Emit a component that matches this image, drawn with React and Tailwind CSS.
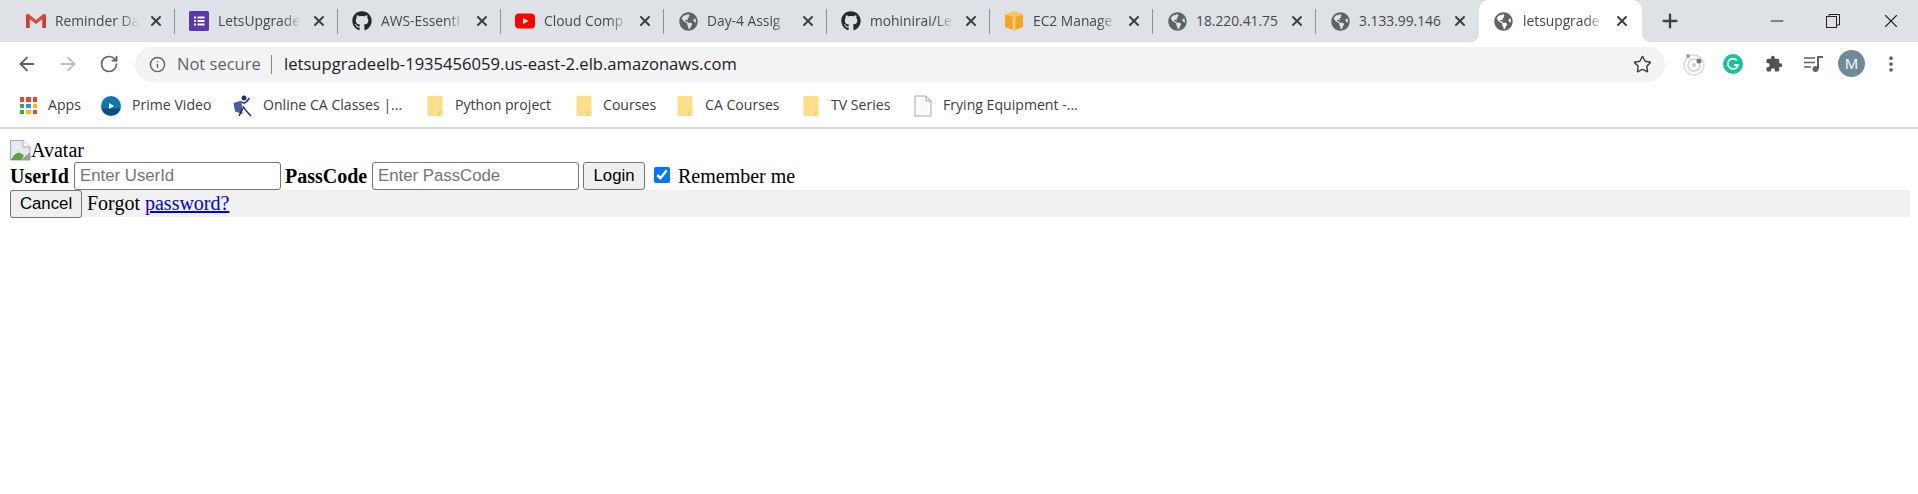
import { ArrowLeft, ArrowRight, RotateCw, Info, Star, X, Plus, Minus, MoreVertical } from 'lucide-react'
import { FaGithub, FaGlobeAmericas } from 'react-icons/fa'

function GmailIcon() {
  return (
    <svg width="20" height="16" viewBox="0 0 20 16" className="shrink-0">
      <path d="M0 2 L2 0.5 L10 7 L18 0.5 L20 2 L20 15 L16.5 15 L16.5 6 L10 11 L3.5 6 L3.5 15 L0 15 Z" fill="#d9483b" />
      <path d="M0 2 L3.5 6 L3.5 15 L0 15 Z" fill="#c5403a" />
      <path d="M20 2 L16.5 6 L16.5 15 L20 15 Z" fill="#c5403a" />
    </svg>
  )
}

function FormsIcon() {
  return (
    <svg width="20" height="20" viewBox="0 0 20 20" className="shrink-0">
      <rect width="20" height="20" rx="1.5" fill="#5e35b1" />
      <path d="M5 5.500h2v2H5zM5 9h2v2H5zM5 12.500h2v2H5zM8.500 5.500h7v2h-7zM8.500 9h7v2h-7zM8.500 12.500h7v2h-7z" fill="#fff" />
    </svg>
  )
}

function YoutubeIcon() {
  return (
    <svg width="20" height="16" viewBox="0 0 20 16" className="shrink-0">
      <rect width="20" height="15" y="0.500" rx="4" fill="#f00" />
      <path d="M8 5 L13.500 8 L8 11 Z" fill="#fff" />
    </svg>
  )
}

function AwsBoxIcon() {
  return (
    <svg width="20" height="20" viewBox="0 0 20 20" className="shrink-0">
      <path d="M10 0.500 L19 3.500 L19 16 L10 19.500 L1 16 L1 3.500 Z" fill="#f5a623" />
      <path d="M1 3.500 L10 0.500 L19 3.500 L10 6.500 Z" fill="#fbc766" />
      <path d="M8.700 6.500 L11.300 6.500 L11.300 19.500 L8.700 19.500 Z" fill="#fbd58d" />
    </svg>
  )
}

const globe = <FaGlobeAmericas size={19} color="#5f6368" className="shrink-0" />
const github = <FaGithub size={20} color="#24292e" className="shrink-0" />

const tabs = [
  { title: 'Reminder Da', icon: <GmailIcon />, fade: true },
  { title: 'LetsUpgrade', icon: <FormsIcon />, fade: true },
  { title: 'AWS-Essenti', icon: github, fade: true },
  { title: 'Cloud Comp', icon: <YoutubeIcon />, fade: true },
  { title: 'Day-4 Assig', icon: globe, fade: true },
  { title: 'mohinirai/Le', icon: github, fade: true },
  { title: 'EC2 Manage', icon: <AwsBoxIcon />, fade: true },
  { title: '18.220.41.75', icon: globe, fade: false },
  { title: '3.133.99.146', icon: globe, fade: false },
]

function Tab({ tab, last }) {
  return (
    <div className="w-[163px] h-[42px] shrink-0 flex items-center relative">
      <div className="flex items-center pl-[14px] w-full">
        <span className="w-[20px] flex justify-center shrink-0">{tab.icon}</span>
        <span
          className={`ml-[9px] w-[84px] whitespace-nowrap text-[13.8px] text-[#45484c] ${
            tab.fade ? '[mask-image:linear-gradient(to_right,black_78%,transparent)]' : ''
          }`}
        >
          {tab.title}
        </span>
        <X size={16} strokeWidth={3} color="#3c4043" className="ml-[9px] shrink-0" />
      </div>
      {!last && <span className="absolute right-0 top-[9px] h-[25px] w-px bg-[#8e9196]" />}
    </div>
  )
}

function ActiveTab() {
  return (
    <div className="w-[163px] h-[42px] shrink-0 flex items-center bg-white rounded-t-[10px] relative pl-[15px]">
      <svg width="8" height="8" viewBox="0 0 8 8" className="absolute -left-[8px] bottom-0">
        <path d="M8 0 V8 H0 C4 8 8 4 8 0 Z" fill="#fff" />
      </svg>
      <svg width="8" height="8" viewBox="0 0 8 8" className="absolute -right-[8px] bottom-0">
        <path d="M0 0 V8 H8 C4 8 0 4 0 0 Z" fill="#fff" />
      </svg>
      {globe}
      <span className="ml-[10px] w-[81px] whitespace-nowrap text-[13.8px] text-[#45484c] [mask-image:linear-gradient(to_right,black_78%,transparent)]">
        letsupgrade
      </span>
      <X size={16} strokeWidth={3} color="#3c4043" className="ml-[10px] shrink-0" />
    </div>
  )
}

function TabStrip() {
  return (
    <div className="h-[42px] bg-[#dee1e6] flex items-center pl-[12px]">
      {tabs.map((t, i) => (
        <Tab key={t.title} tab={t} last={i === tabs.length - 1} />
      ))}
      <ActiveTab />
      <Plus size={22} strokeWidth={2.5} color="#3c4043" className="ml-[17px] shrink-0" />
      <div className="ml-auto flex items-center text-[#3c4043]">
        <Minus size={20} strokeWidth={1.2} color="#222" className="mr-[39px]" />
        <svg width="14" height="14" viewBox="0 0 14 14" fill="none" stroke="#222" strokeWidth="1" className="mr-[40px]">
          <rect x="0.500" y="2.500" width="10" height="11" />
          <path d="M3 2.500 V0.500 H13.500 V11 H10.500" />
        </svg>
        <X size={22} strokeWidth={1.2} color="#222" className="mr-[16px]" />
      </div>
    </div>
  )
}

function ExtTarget() {
  return (
    <svg width="22" height="24" viewBox="0 0 22 24" fill="none" className="shrink-0">
      <circle cx="11" cy="13" r="10" stroke="#dcdcdc" strokeWidth="1.500" />
      <circle cx="11" cy="13" r="6" stroke="#cfcfcf" strokeWidth="1.500" />
      <circle cx="11" cy="13" r="2" fill="#cfcfcf" />
      <circle cx="5" cy="4" r="2" fill="#a0a0a0" />
      <circle cx="16" cy="9" r="2.500" fill="#777" />
    </svg>
  )
}

function GrammarlyIcon() {
  return (
    <svg width="20" height="20" viewBox="0 0 20 20" fill="none" className="shrink-0">
      <circle cx="10" cy="10" r="10" fill="#15c39a" />
      <path d="M14 6.500 A5.200 5.200 0 1 0 15 11 H11" stroke="#fff" strokeWidth="1.800" />
    </svg>
  )
}

function PuzzleIcon() {
  return (
    <svg width="18" height="18" viewBox="0 0 24 24" fill="#4f5357" className="shrink-0">
      <path d="M20.500 11H19V7a2 2 0 0 0-2-2h-4V3.500a2.500 2.500 0 0 0-5 0V5H4a2 2 0 0 0-2 2v3.800h1.500a2.700 2.700 0 0 1 0 5.400H2V20a2 2 0 0 0 2 2h3.800v-1.500a2.700 2.700 0 0 1 5.400 0V22H17a2 2 0 0 0 2-2v-4h1.500a2.500 2.500 0 0 0 0-5z" />
    </svg>
  )
}

function QueueIcon() {
  return (
    <svg width="20" height="18" viewBox="0 0 20 18" fill="none" className="shrink-0">
      <path d="M0 3h11M0 7.500h11M0 12h7" stroke="#5f6368" strokeWidth="1.600" />
      <path d="M14 14V2h5" stroke="#5f6368" strokeWidth="2" />
      <circle cx="11.500" cy="14" r="3" fill="#5f6368" />
    </svg>
  )
}

function Toolbar() {
  return (
    <div className="h-[43px] bg-white flex items-center">
      <ArrowLeft size={22} strokeWidth={2} color="#5f6368" className="ml-[16px] shrink-0" />
      <ArrowRight size={22} strokeWidth={2} color="#bcbfc3" className="ml-[19px] shrink-0" />
      <RotateCw size={20} strokeWidth={2} color="#5f6368" className="ml-[20px] shrink-0" />
      <div className="ml-[16px] w-[1530px] h-[35px] mt-[1px] rounded-full bg-[#f1f3f4] flex items-center pl-[14px] pr-[13px] shrink-0">
        <Info size={17} strokeWidth={2} color="#5f6368" className="shrink-0" />
        <span className="ml-[11px] text-[16.5px] text-[#5f6368] whitespace-nowrap w-[85px] pt-[1px]">Not secure</span>
        <span className="ml-[9px] w-px h-[19px] bg-[#80868b]" />
        <span className="ml-[12px] text-[16.6px] text-[#202124] whitespace-nowrap pt-[1px]">
          letsupgradeelb-1935456059.us-east-2.elb.amazonaws.com
        </span>
        <Star size={19} strokeWidth={1.8} color="#3c4043" className="ml-auto shrink-0" />
      </div>
      <div className="ml-[18px] flex items-center">
        <span className="w-[22px] flex justify-center"><ExtTarget /></span>
        <span className="ml-[17px] w-[22px] flex justify-center"><GrammarlyIcon /></span>
        <span className="ml-[19px] w-[22px] flex justify-center"><PuzzleIcon /></span>
        <span className="ml-[18px] w-[22px] flex justify-center"><QueueIcon /></span>
        <span className="ml-[13px] w-[27px] h-[27px] rounded-full bg-[#6f8a99] text-white text-[15px] flex items-center justify-center">M</span>
        <MoreVertical size={20} strokeWidth={2.5} color="#5f6368" className="ml-[16px]" />
      </div>
    </div>
  )
}

const appColors = ['#ea4335', '#ea4335', '#ea4335', '#34a853', '#4285f4', '#fbbc05', '#34a853', '#fbbc05', '#ea4335']

function AppsIcon() {
  return (
    <span className="grid grid-cols-3 gap-[2px] w-[17px] h-[17px] shrink-0">
      {appColors.map((c, i) => (
        <span key={i} className="w-[4.3px] h-[4.3px]" style={{ background: c }} />
      ))}
    </span>
  )
}

function PrimeIcon() {
  return (
    <svg width="20" height="20" viewBox="0 0 20 20" className="shrink-0">
      <circle cx="10" cy="10" r="10" fill="#0f79af" />
      <path d="M0.500 12.500 A10 10 0 0 0 19.500 12.500 Z" fill="#0b4f80" />
      <path d="M8 7 L13 10 L8 13 Z" fill="#fff" />
    </svg>
  )
}

function OnlineCaIcon() {
  return (
    <svg width="20" height="22" viewBox="0 0 20 22" fill="none" className="shrink-0">
      <circle cx="11" cy="3" r="2.500" fill="#2b2d6e" />
      <path d="M0.500 8 L8.500 5.500 L9.500 19 L2 16.500 Z" fill="#4a5a9a" />
      <path d="M9 7 C12 10 14 6 16.500 3 M10 11 C12 15 14 17 18 21 M10 13 L6 21" stroke="#23256a" strokeWidth="1.500" />
    </svg>
  )
}

function FolderIcon() {
  return (
    <svg width="16" height="22" viewBox="0 0 16 22" className="shrink-0">
      <path d="M1.500 1 H11 L14 1 Q15.500 1 15.500 2.500 V20 Q15.500 21 14.500 21 H2 Q0.500 21 0.500 20 V2 Q0.500 1 1.500 1 Z" fill="#fbdf8a" />
      <path d="M12 21 V17 H15.500" fill="none" stroke="#e6c25e" strokeWidth="0.800" />
    </svg>
  )
}

function DocIcon() {
  return (
    <svg width="18" height="22" viewBox="0 0 18 22" className="shrink-0">
      <path d="M1 1 H12 L17 6 V21 H1 Z" fill="#fafafa" stroke="#a8a8a8" />
      <path d="M12 1 V6 H17" fill="none" stroke="#a8a8a8" />
    </svg>
  )
}

const bookmarks = [
  { label: 'Apps', icon: <AppsIcon />, cls: 'w-[81px]', gap: 'ml-[11px]' },
  { label: 'Prime Video', icon: <PrimeIcon />, cls: 'w-[132px]', gap: 'ml-[11px]' },
  { label: 'Online CA Classes |...', icon: <OnlineCaIcon />, cls: 'w-[194px]', gap: 'ml-[10px]' },
  { label: 'Python project', icon: <FolderIcon />, cls: 'w-[149px]', gap: 'ml-[12px]' },
  { label: 'Courses', icon: <FolderIcon />, cls: 'w-[101px]', gap: 'ml-[11px]' },
  { label: 'CA Courses', icon: <FolderIcon />, cls: 'w-[126px]', gap: 'ml-[12px]' },
  { label: 'TV Series', icon: <FolderIcon />, cls: 'w-[111px]', gap: 'ml-[12px]' },
  { label: 'Frying Equipment -...', icon: <DocIcon />, cls: 'w-[170px]', gap: 'ml-[11px]' },
]

function BookmarkBar() {
  return (
    <div className="h-[42px] bg-white flex items-center pl-[20px]">
      {bookmarks.map(b => (
        <div key={b.label} className={`${b.cls} flex items-center shrink-0`}>
          {b.icon}
          <span className={`${b.gap} text-[14.1px] text-[#3c4043] whitespace-nowrap mb-[2px]`}>{b.label}</span>
        </div>
      ))}
    </div>
  )
}

function BrokenImage() {
  return (
    <svg width="21" height="21" viewBox="0 0 21 21" className="shrink-0">
      <path d="M0.500 0.500 H13 L20 7 V20 H0.500 Z" fill="#e4eaf1" stroke="#a9a9a9" />
      <path d="M13 0.500 V7 H20" fill="#fff" stroke="#a9a9a9" />
      <path d="M1 20 C5 11 11 11 14 16 L11 20 Z" fill="#5ba33d" />
      <path d="M11 20 L20 12 V20 Z" fill="#9a9a9a" />
      <path d="M4 8 C6 6 9 7 10 8 Z" fill="#fff" />
    </svg>
  )
}

function LoginPage() {
  return (
    <div className="pt-[9px] pl-[10px] pr-[8px] font-['Liberation_Serif',serif] text-[20px] leading-[22px] text-black">
      <div className="h-[24px] flex items-center">
        <BrokenImage />
        <span>Avatar</span>
      </div>
      <div className="h-[28px] flex items-center">
        <b className="w-[64px] mb-[1px]">UserId</b>
        <input
          placeholder="Enter UserId"
          className="w-[207px] h-[28px] border border-[#767676] rounded-[3px] pl-[5px] font-['Liberation_Sans',sans-serif] text-[16.8px] placeholder:text-[#757575] bg-white"
        />
        <b className="ml-[4px] w-[87px] mb-[1px]">PassCode</b>
        <input
          placeholder="Enter PassCode"
          className="w-[207px] h-[28px] border border-[#767676] rounded-[3px] pl-[5px] font-['Liberation_Sans',sans-serif] text-[16.8px] placeholder:text-[#757575] bg-white"
        />
        <button className="ml-[4px] w-[62px] h-[28px] border border-[#767676] rounded-[3px] bg-[#efefef] font-['Liberation_Sans',sans-serif] text-[16.8px]">
          Login
        </button>
        <input type="checkbox" defaultChecked className="ml-[9px] w-[16px] h-[16px] accent-[#0075ff] mb-[3px]" />
        <span className="ml-[8px] mb-[1px]">Remember me</span>
      </div>
      <div className="h-[27px] bg-[#f1f1f1] flex items-center">
        <button className="w-[72px] h-[28px] border border-[#767676] rounded-[3px] bg-[#efefef] font-['Liberation_Sans',sans-serif] text-[16.8px]">
          Cancel
        </button>
        <span className="ml-[5px] mb-[1px]">Forgot</span>
        <a href="#" className="ml-[5px] mb-[1px] text-[#0000ee] underline">password?</a>
      </div>
    </div>
  )
}

export default function App() {
  return (
    <div className="w-[1918px] h-[494px] bg-white overflow-hidden font-['Open_Sans',sans-serif]">
      <TabStrip />
      <Toolbar />
      <BookmarkBar />
      <div className="h-[2px] bg-[#d9d9d9]" />
      <LoginPage />
    </div>
  )
}
